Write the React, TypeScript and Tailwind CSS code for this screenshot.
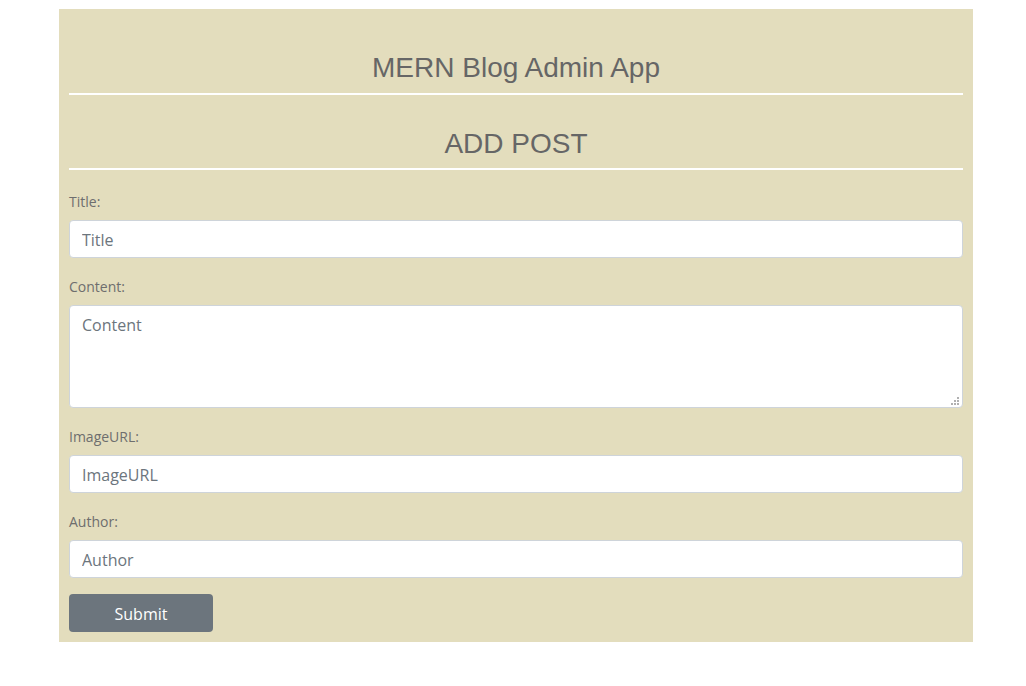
import { useState } from 'react';

const labelCls = "block text-[14px] leading-[21px] text-[#6e6e6e] mb-[8px]";
const inputCls = "block w-full h-[38px] px-[12px] pt-[2px] rounded-[4px] border border-[#ced4da] bg-white text-[16px] text-[#495057] placeholder:text-[#6c757d] outline-none";

const App = () => {
  const [title, setTitle] = useState('');
  const [content, setContent] = useState('');
  const [imageUrl, setImageUrl] = useState('');
  const [author, setAuthor] = useState('');

  return <div className="min-h-screen bg-white pt-[9px]">
      <div className="ml-[59px] w-[914px] bg-[#e3ddbd] px-[10px] pb-[10px] [font-family:'Open_Sans',sans-serif]">
        {/* Header */}
        <h2 className="pt-[42px] pb-[8px] text-center text-[28px] leading-[34px] text-[#666] [font-family:'Liberation_Sans',Arial,sans-serif]">
          MERN Blog Admin App
        </h2>
        <hr className="border-0 h-[2px] bg-white" />

        <h3 className="pt-[32px] pb-[7px] text-center text-[28px] leading-[34px] text-[#666] [font-family:'Liberation_Sans',Arial,sans-serif]">
          ADD POST
        </h3>
        <hr className="border-0 h-[2px] bg-white" />

        {/* Form */}
        <form className="pt-[21px]" onSubmit={e => e.preventDefault()}>
          <div className="mb-[18px]">
            <label className={labelCls}>Title:</label>
            <input className={inputCls} placeholder="Title" value={title} onChange={e => setTitle(e.target.value)} />
          </div>
          <div className="mb-[18px]">
            <label className={labelCls}>Content:</label>
            <div className="relative">
              <textarea className="block w-full h-[103px] px-[12px] py-[7px] rounded-[4px] border border-[#ced4da] bg-white text-[16px] leading-[24px] text-[#495057] placeholder:text-[#6c757d] outline-none resize-none" placeholder="Content" value={content} onChange={e => setContent(e.target.value)} />
              {/* resize grip */}
              <svg className="absolute right-[4px] bottom-[3px] pointer-events-none" width="8" height="8" viewBox="0 0 8 8" fill="#b0b0b0">
                <rect x="6" y="0" width="2" height="2" />
                <rect x="3" y="3" width="2" height="2" />
                <rect x="6" y="3" width="2" height="2" />
                <rect x="0" y="6" width="2" height="2" />
                <rect x="3" y="6" width="2" height="2" />
                <rect x="6" y="6" width="2" height="2" />
              </svg>
            </div>
          </div>
          <div className="mb-[18px]">
            <label className={labelCls}>ImageURL:</label>
            <input className={inputCls} placeholder="ImageURL" value={imageUrl} onChange={e => setImageUrl(e.target.value)} />
          </div>
          <div className="mb-[16px]">
            <label className={labelCls}>Author:</label>
            <input className={inputCls} placeholder="Author" value={author} onChange={e => setAuthor(e.target.value)} />
          </div>
          <button type="submit" className="block w-[144px] h-[38px] pt-[2px] rounded-[4px] bg-[#6c757d] text-white text-[16px]">
            Submit
          </button>
        </form>
      </div>
    </div>;
};
export default App;
